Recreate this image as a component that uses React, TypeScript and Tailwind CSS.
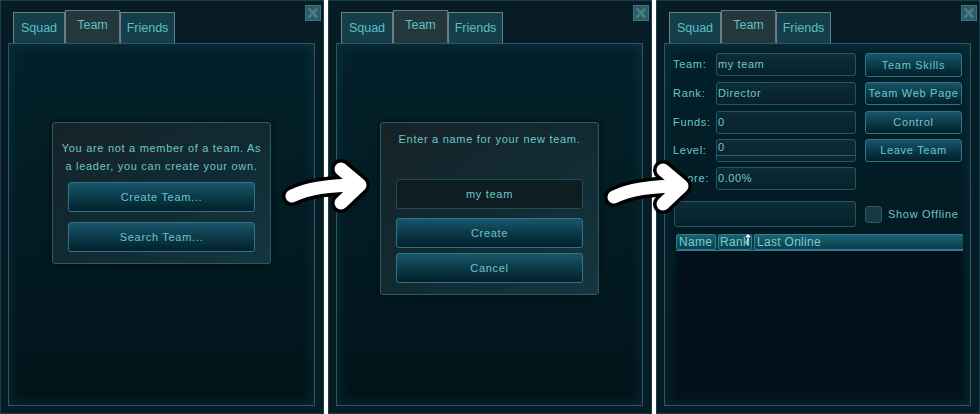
import React from "react";

const font = "font-['Liberation_Sans','DejaVu_Sans',sans-serif]";

function CloseBox() {
  return (
    <div className="absolute left-[304px] top-[4px] h-[16px] w-[16px] border border-[#3f727c] bg-[#2d5a65]">
      <svg viewBox="0 0 16 16" className="h-full w-full">
        <path d="M3 3 L13 13 M13 3 L3 13" stroke="#4a7f8a" strokeWidth="3" />
      </svg>
    </div>
  );
}

function Tabs() {
  return (
    <div className="flex h-[33px] items-end pl-[12px]">
      <div className="flex h-[31px] w-[52px] items-center justify-center border border-b-0 border-[#6d8288] bg-[#143e4a] text-[12.5px] text-[#5ebfc4]">
        Squad
      </div>
      <div className="flex h-[33px] w-[55px] items-center justify-center border border-b-0 border-[#6a777b] bg-[#24373c] pb-[3px] text-[12.5px] text-[#5ebfc4]">
        Team
      </div>
      <div className="flex h-[31px] w-[55px] items-center justify-center border border-b-0 border-[#6d8288] bg-[#143e4a] text-[12.5px] text-[#5ebfc4]">
        Friends
      </div>
    </div>
  );
}

function Panel({ children }: { children: React.ReactNode }) {
  return (
    <div className="relative flex h-[414px] w-[324px] flex-col border border-[#1a3f4b] bg-[#071c24] pt-[9px]">
      <CloseBox />
      <Tabs />
      <div className="ml-[7px] h-[363px] w-[307px] border border-[#28586a] bg-gradient-to-b from-[#03212b] to-[#02141a] shadow-[inset_0_0_14px_rgba(40,110,130,0.25)]">
        {children}
      </div>
    </div>
  );
}

function Btn({ label, className = "" }: { label: string; className?: string }) {
  return (
    <div
      className={`flex items-center justify-center whitespace-nowrap rounded-[3px] border border-[#2d7688] bg-gradient-to-b from-[#18566a] to-[#03202b] text-[11px] tracking-[0.7px] text-[#6cc5c9] ${className}`}
    >
      {label}
    </div>
  );
}

function Dialog({ children }: { children: React.ReactNode }) {
  return (
    <div className="w-[219px] rounded-[3px] border border-[#2e5a66] bg-gradient-to-br from-[#162328] via-[#112a32] to-[#143640] px-[15px] shadow-[0_0_6px_rgba(0,0,0,0.5)]">
      {children}
    </div>
  );
}

function Field({ value, className = "" }: { value: string; className?: string }) {
  return (
    <div
      className={`flex items-center rounded-[3px] border border-[#245766] bg-gradient-to-b from-[#0c2c37] to-[#082129] pl-[1px] text-[11px] tracking-[0.6px] text-[#6cc5c9] ${className}`}
    >
      {value}
    </div>
  );
}

function Arrow({ className }: { className: string }) {
  return (
    <svg viewBox="0 0 96 62" className={`absolute h-[62px] w-[96px] ${className}`}>
      <g fill="none" strokeLinecap="round" strokeLinejoin="round">
        <path d="M13 40 Q 35 29 80 29" stroke="#000" strokeWidth="20" />
        <path d="M62 13 L 81 29 L 62 47" stroke="#000" strokeWidth="20" />
        <path d="M13 40 Q 35 29 80 29" stroke="#fff" strokeWidth="13" />
        <path d="M62 13 L 81 29 L 62 47" stroke="#fff" strokeWidth="13" />
      </g>
    </svg>
  );
}

function Row({ label, children, className = "" }: { label: string; children: React.ReactNode; className?: string }) {
  return (
    <div className={`flex h-[23px] items-center ${className}`}>
      <div className="w-[43px] text-[11px] tracking-[0.7px] text-[#6cc5c9]">{label}</div>
      {children}
    </div>
  );
}

export default function App() {
  return (
    <div className={`relative flex h-[414px] w-[980px] gap-[4px] overflow-hidden bg-white ${font}`}>
      {/* not a member */}
      <Panel>
        <div className="flex justify-center pt-[78px]">
          <Dialog>
            <p className="-mx-[10px] whitespace-nowrap pt-[16px] text-center text-[11px] leading-[18px] tracking-[0.7px] text-[#6cc5c9]">
              You are not a member of a team. As
              <br />a leader, you can create your own.
            </p>
            <Btn label="Create Team..." className="mt-[7px] h-[30px]" />
            <Btn label="Search Team..." className="mb-[11px] mt-[10px] h-[30px]" />
          </Dialog>
        </div>
      </Panel>

      {/* create team */}
      <Panel>
        <div className="flex justify-center pt-[78px]">
          <Dialog>
            <p className="-mx-[10px] whitespace-nowrap pt-[7px] text-center text-[11px] leading-[18px] tracking-[0.7px] text-[#6cc5c9]">
              Enter a name for your new team.
            </p>
            <div className="mt-[31px] flex h-[30px] items-center justify-center rounded-[3px] border border-[#244a55] bg-[#0e1d22] text-[11px] tracking-[0.7px] text-[#6cc5c9]">
              my team
            </div>
            <Btn label="Create" className="mt-[9px] h-[30px]" />
            <Btn label="Cancel" className="mb-[11px] mt-[5px] h-[30px]" />
          </Dialog>
        </div>
      </Panel>

      {/* team info */}
      <Panel>
        <div className="flex flex-col pt-[9px]">
          <div className="flex pl-[8px] pr-[8px]">
            <div className="flex w-[183px] flex-col">
              <Row label="Team:">
                <Field value="my team" className="h-[23px] w-[140px]" />
              </Row>
              <Row label="Rank:" className="mt-[6px]">
                <Field value="Director" className="h-[23px] w-[140px]" />
              </Row>
              <Row label="Funds:" className="mt-[6px]">
                <Field value="0" className="h-[23px] w-[140px]" />
              </Row>
              <Row label="Level:" className="mt-[5px]">
                <div className="flex h-[23px] w-[140px] flex-col overflow-hidden rounded-[3px] border border-[#245766] bg-gradient-to-b from-[#0c2c37] to-[#082129]">
                  <div className="flex h-[16px] items-center border-b border-[#2a6373] pl-[1px] text-[11px] text-[#6cc5c9]">0</div>
                  <div className="flex-1 bg-[#0a2730]" />
                </div>
              </Row>
              <Row label="Score:" className="mt-[5px]">
                <Field value="0.00%" className="h-[23px] w-[140px]" />
              </Row>
            </div>
            <div className="ml-[9px] flex w-[97px] flex-col">
              <Btn label="Team Skills" className="h-[24px]" />
              <Btn label="Team Web Page" className="mt-[5px] h-[23px]" />
              <Btn label="Control" className="mt-[6px] h-[23px]" />
              <Btn label="Leave Team" className="mt-[5px] h-[23px]" />
            </div>
          </div>

          <div className="mt-[11px] flex items-center pl-[9px]">
            <div className="h-[26px] w-[182px] rounded-[3px] border border-[#245766] bg-gradient-to-b from-[#0c2c37] to-[#082129]" />
            <div className="ml-[9px] h-[17px] w-[17px] rounded-[3px] border border-[#2c5a66] bg-[#163a45]" />
            <span className="ml-[6px] text-[11px] tracking-[0.7px] text-[#6cc5c9]">Show Offline</span>
          </div>

          <div className="ml-[11px] mt-[7px] w-[287px]">
            <div className="relative flex h-[17px] gap-[2px] border-b border-[#2f8090] bg-[#0c3c49] text-[12px] tracking-[0.3px] text-[#74cdd0]">
              <div className="flex w-[40px] items-center rounded-[3px] border border-[#2f7e8f] bg-gradient-to-b from-[#1b6273] to-[#0c3d4b] pl-[2px]">Name</div>
              <div className="flex w-[34px] items-center rounded-[3px] border border-[#2f7e8f] bg-gradient-to-b from-[#1b6273] to-[#0c3d4b] pl-[1px]">Rank</div>
              <div className="flex flex-1 items-center rounded-l-[3px] border border-r-0 border-[#2f7e8f] bg-gradient-to-b from-[#1b6273] to-[#0c3d4b] pl-[2px]">Last Online</div>
              <svg viewBox="0 0 6 12" className="absolute left-[69px] top-[0px] h-[12px] w-[6px]">
                <path d="M3 11 L3 1 M1 3 L3 1 L5 3" stroke="#fff" strokeWidth="1.2" fill="none" />
              </svg>
            </div>
            <div className="h-[148px] bg-[#02111a]" />
          </div>
        </div>
      </Panel>

      <Arrow className="left-[279px] top-[156px]" />
      <Arrow className="left-[601px] top-[157px]" />
    </div>
  );
}
